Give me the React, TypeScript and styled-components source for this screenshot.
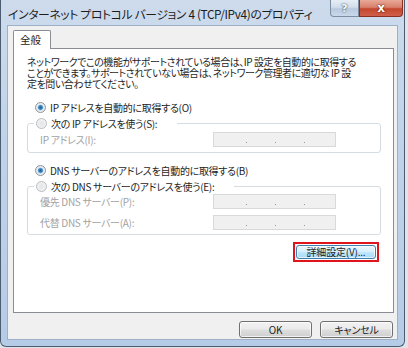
import React from "react";
import styled, { createGlobalStyle } from "styled-components";

const GlobalStyle = createGlobalStyle`
  html, body { margin: 0; padding: 0; }
  body {
    background: #dfe4ea;
    width: 408px;
    height: 348px;
    overflow: hidden;
    font-family: "Noto Sans CJK JP", "Noto Sans", sans-serif;
    font-feature-settings: "palt";
    color: #1e1e1e;
  }
`;

const Window = styled.div`
  width: 405px;
  height: 347px;
  box-sizing: border-box;
  border: 1px solid #4c5d72;
  border-top: none;
  border-radius: 0 0 6px 6px;
  background: linear-gradient(180deg, #cddbec 0%, #c0d3ea 40%, #b6cbe6 100%);
  display: flex;
  flex-direction: column;
  padding: 0 6px 6px 6px;
`;

const TitleBar = styled.div`
  height: 25px;
  display: flex;
  align-items: flex-start;
  justify-content: space-between;
  margin-right: -5px;
`;

const Title = styled.div`
  font-size: 11.8px;
  line-height: 14px;
  padding-top: 7px;
  padding-left: 1px;
  color: #1c1c1c;
  letter-spacing: -0.35px;
  white-space: nowrap;
`;

const CaptionButtons = styled.div`
  display: flex;
  height: 18px;
`;

const CaptionButton = styled.div<{ $close?: boolean }>`
  width: ${(p) => (p.$close ? "44px" : "29px")};
  height: 17px;
  box-sizing: border-box;
  border: 1px solid ${(p) => (p.$close ? "#8a2f22" : "#7d8ea3")};
  border-top: none;
  border-radius: ${(p) => (p.$close ? "0 0 4px 0" : "0 0 0 4px")};
  background: ${(p) =>
    p.$close
      ? "linear-gradient(180deg, #e8a898 0%, #d9826f 45%, #c5462e 55%, #d0604a 100%)"
      : "linear-gradient(180deg, #e6edf5 0%, #d2deec 45%, #b9c9dd 55%, #cad8ea 100%)"};
  display: flex;
  align-items: center;
  justify-content: center;
  font-family: "DejaVu Sans", sans-serif;
  font-weight: bold;
  font-size: ${(p) => (p.$close ? "12px" : "11px")};
  color: ${(p) => (p.$close ? "#ffffff" : "#f4f7fb")};
  text-shadow: 0 0 2px ${(p) => (p.$close ? "#5a1a10" : "#4a5c73")},
    0 0 1px ${(p) => (p.$close ? "#5a1a10" : "#4a5c73")};
`;

const Client = styled.div`
  flex: 1;
  background: #f0f0f0;
  border: 1px solid #9cb0c8;
  display: flex;
  flex-direction: column;
  padding: 4px 3px 0 5px;
`;

const TabStrip = styled.div`
  display: flex;
  position: relative;
  z-index: 1;
  height: 19px;
`;

const Tab = styled.div`
  width: 38px;
  height: 19px;
  box-sizing: border-box;
  background: #ffffff;
  border: 1px solid #898c95;
  border-bottom: none;
  border-radius: 2px 2px 0 0;
  font-size: 10.5px;
  line-height: 17px;
  padding-left: 6px;
`;

const TabPanel = styled.div`
  height: 265px;
  box-sizing: border-box;
  margin-top: -1px;
  background: #ffffff;
  border: 1px solid #898c95;
  padding: 7px 12px 0 13px;
  display: flex;
  flex-direction: column;
`;

const Description = styled.p`
  margin: 0;
  font-size: 10px;
  line-height: 11px;
  letter-spacing: -0.45px;
  white-space: nowrap;
  color: #1e1e1e;
`;

const RadioRow = styled.label<{ $top: number }>`
  display: flex;
  align-items: center;
  gap: 4px;
  height: 14px;
  margin-top: ${(p) => p.$top}px;
  padding-left: 8px;
  font-size: 10px;
  letter-spacing: -0.3px;
  white-space: nowrap;
  color: #1e1e1e;
`;

const Radio = styled.span<{ $checked?: boolean }>`
  width: 11px;
  height: 11px;
  box-sizing: border-box;
  border-radius: 50%;
  border: 1px solid ${(p) => (p.$checked ? "#8e9399" : "#b8bcc0")};
  background: ${(p) =>
    p.$checked
      ? "radial-gradient(circle at 50% 50%, #1f5f95 0%, #3d86c0 30%, #9ccaee 42%, #e6e9ec 50%, #f6f6f6 100%)"
      : "radial-gradient(circle at 50% 50%, #e4e4e4 0%, #eeeeee 50%, #f7f7f7 100%)"};
  flex: none;
`;

const Group = styled.fieldset<{ $top: number; $bottom: number }>`
  margin: ${(p) => p.$top}px 0 0 0;
  padding: 0 0 ${(p) => p.$bottom}px 0;
  border: 1px solid #d3dce3;
  border-radius: 3px;
  min-width: 0;
`;

const Legend = styled.legend`
  margin-left: 6px;
  padding: 0 20px 0 2px;
  height: 14px;
  display: flex;
  align-items: center;
  gap: 4px;
  font-size: 10px;
  letter-spacing: -0.3px;
  white-space: nowrap;
  color: #1e1e1e;
`;

const FieldRow = styled.div<{ $top: number }>`
  display: flex;
  align-items: center;
  margin-top: ${(p) => p.$top}px;
  padding-left: 12px;
  height: 15px;
`;

const FieldLabel = styled.span`
  width: 173px;
  font-size: 10px;
  letter-spacing: -0.3px;
  color: #a2a2a2;
  white-space: nowrap;
`;

const IpBox = styled.div`
  width: 123px;
  height: 15px;
  box-sizing: border-box;
  border: 1px solid #d9d9d9;
  background: #f0f0f0;
  display: flex;
  gap: 28px;
  padding-left: 32px;
  align-items: flex-end;
`;

const IpDot = styled.span`
  width: 1px;
  height: 1px;
  margin-bottom: 3px;
  background: #9a9a9a;
`;

const AdvancedRow = styled.div`
  display: flex;
  justify-content: flex-end;
  margin-top: 7px;
  padding-right: 2px;
`;

const Highlight = styled.div`
  border: 2px solid #e0141c;
  padding: 1px;
`;

const PushButton = styled.button<{ $width: number; $hot?: boolean }>`
  width: ${(p) => p.$width}px;
  height: ${(p) => (p.$hot ? 14 : 17)}px;
  box-sizing: border-box;
  margin: 0;
  padding: 0;
  border: 1px solid ${(p) => (p.$hot ? "#3c7fb1" : "#707070")};
  border-radius: 3px;
  background: ${(p) =>
    p.$hot
      ? "linear-gradient(180deg, #eaf6fd 0%, #d9f0fc 45%, #bee6fd 55%, #a7d9f5 100%)"
      : "linear-gradient(180deg, #f2f2f2 0%, #ebebeb 45%, #dddddd 55%, #cfcfcf 100%)"};
  box-shadow: inset 0 0 0 1px rgba(255, 255, 255, 0.7);
  font-family: "Noto Sans CJK JP", "Noto Sans", sans-serif;
  font-feature-settings: "palt";
  font-size: 10px;
  line-height: 1;
  color: #1e1e1e;
  display: flex;
  align-items: center;
  justify-content: center;
  letter-spacing: -0.2px;
`;

const ButtonRow = styled.div`
  display: flex;
  justify-content: flex-end;
  gap: 8px;
  margin-top: 8px;
  padding-right: 1px;
`;

const IpField: React.FC = () => (
  <IpBox>
    <IpDot />
    <IpDot />
    <IpDot />
  </IpBox>
);

export default function App() {
  return (
    <>
      <GlobalStyle />
      <Window>
        <TitleBar>
          <Title>インターネット プロトコル バージョン 4 (TCP/IPv4)のプロパティ</Title>
          <CaptionButtons>
            <CaptionButton>?</CaptionButton>
            <CaptionButton $close>x</CaptionButton>
          </CaptionButtons>
        </TitleBar>
        <Client>
          <TabStrip>
            <Tab>全般</Tab>
          </TabStrip>
          <TabPanel>
            <Description>
              ネットワークでこの機能がサポートされている場合は、IP 設定を自動的に取得する
              <br />
              ことができます。サポートされていない場合は、ネットワーク管理者に適切な IP 設
              <br />
              定を問い合わせてください。
            </Description>
            <RadioRow $top={11}>
              <Radio $checked />
              IP アドレスを自動的に取得する(O)
            </RadioRow>
            <Group $top={2} $bottom={5}>
              <Legend>
                <Radio />
                次の IP アドレスを使う(S):
              </Legend>
              <FieldRow $top={2}>
                <FieldLabel>IP アドレス(I):</FieldLabel>
                <IpField />
              </FieldRow>
            </Group>
            <RadioRow $top={10}>
              <Radio $checked />
              DNS サーバーのアドレスを自動的に取得する(B)
            </RadioRow>
            <Group $top={2} $bottom={4}>
              <Legend>
                <Radio />
                次の DNS サーバーのアドレスを使う(E):
              </Legend>
              <FieldRow $top={1}>
                <FieldLabel>優先 DNS サーバー(P):</FieldLabel>
                <IpField />
              </FieldRow>
              <FieldRow $top={6}>
                <FieldLabel>代替 DNS サーバー(A):</FieldLabel>
                <IpField />
              </FieldRow>
            </Group>
            <AdvancedRow>
              <Highlight>
                <PushButton $width={80} $hot>
                  詳細設定(V)...
                </PushButton>
              </Highlight>
            </AdvancedRow>
          </TabPanel>
          <ButtonRow>
            <PushButton $width={73}>OK</PushButton>
            <PushButton $width={73}>キャンセル</PushButton>
          </ButtonRow>
        </Client>
      </Window>
    </>
  );
}
